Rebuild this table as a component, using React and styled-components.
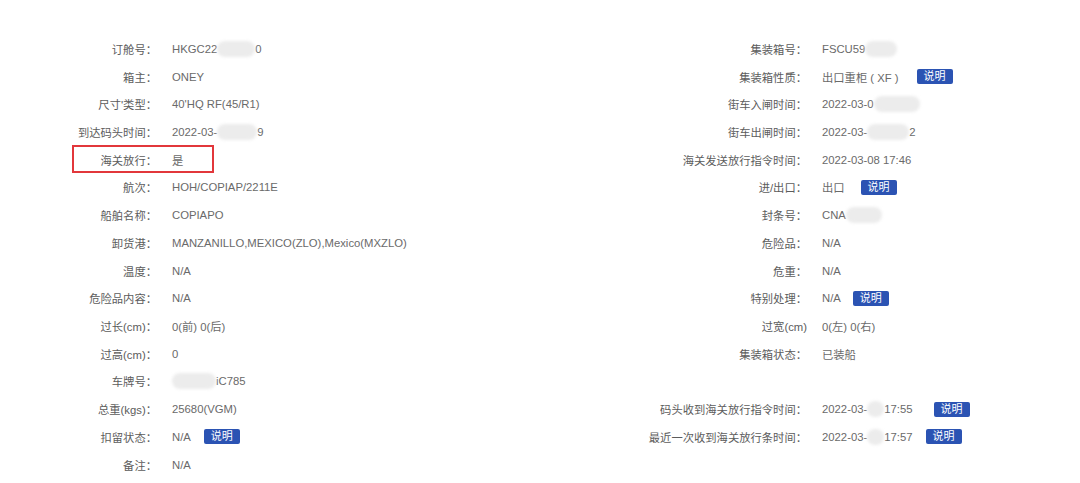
import React from 'react';
import styled, { createGlobalStyle } from 'styled-components';

const GlobalStyle = createGlobalStyle`
  html, body {
    margin: 0;
    padding: 0;
    background: #ffffff;
  }
  body {
    font-family: "Liberation Sans", Arial, "Noto Sans CJK SC", sans-serif;
    font-size: 11.3px;
    color: #666666;
  }
`;

const left = [
  { label: '订舱号', value: ['HKGC22', { blur: 38 }, '0'] },
  { label: '箱主', value: ['ONEY'] },
  { label: "尺寸'类型", value: ["40'HQ RF(45/R1)"] },
  { label: '到达码头时间', value: ['2022-03-', { blur: 40 }, '9'] },
  { label: '海关放行', value: ['是'], highlight: true },
  { label: '航次', value: ['HOH/COPIAP/2211E'] },
  { label: '船舶名称', value: ['COPIAPO'] },
  { label: '卸货港', value: ['MANZANILLO,MEXICO(ZLO),Mexico(MXZLO)'] },
  { label: '温度', value: ['N/A'] },
  { label: '危险品内容', value: ['N/A'] },
  { label: '过长(cm)', value: ['0(前) 0(后)'] },
  { label: '过高(cm)', value: ['0'] },
  { label: '车牌号', value: [{ blur: 44 }, 'iC785'] },
  { label: '总重(kgs)', value: ['25680(VGM)'] },
  { label: '扣留状态', value: ['N/A'], note: 13 },
  { label: '备注', value: ['N/A'] },
];

const right = [
  { label: '集装箱号', value: ['FSCU59', { blur: 32 }] },
  { label: '集装箱性质', value: ['出口重柜 ( XF )'], note: 18 },
  { label: '街车入闸时间', value: ['2022-03-0', { blur: 46 }] },
  { label: '街车出闸时间', value: ['2022-03-', { blur: 42 }, '2'] },
  { label: '海关发送放行指令时间', value: ['2022-03-08 17:46'] },
  { label: '进/出口', value: ['出口'], note: 16 },
  { label: '封条号', value: ['CNA', { blur: 36 }] },
  { label: '危险品', value: ['N/A'] },
  { label: '危重', value: ['N/A'] },
  { label: '特别处理', value: ['N/A'], note: 12 },
  { label: '过宽(cm)', value: ['0(左) 0(右)'], noColon: true },
  { label: '集装箱状态', value: ['已装船'] },
  null,
  { label: '码头收到海关放行指令时间', value: ['2022-03-', { blur: 17 }, '17:55'], note: 21 },
  { label: '最近一次收到海关放行条时间', value: ['2022-03-', { blur: 17 }, '17:57'], note: 13 },
];

function App() {
  return (
    <>
      <GlobalStyle />
      <Page>
        <Column $labelWidth={157} $width={540}>
          {left.map((row, i) => (
            <Field key={i} row={row} />
          ))}
        </Column>
        <Column $labelWidth={267} $width={540}>
          {right.map((row, i) => (
            <Field key={i} row={row} />
          ))}
        </Column>
      </Page>
    </>
  );
}

function Field({ row }) {
  if (!row) return <Row />;
  return (
    <Row $highlight={row.highlight}>
      <Label>
        {row.label}
        {row.noColon ? '' : '：'}
      </Label>
      <Value>
        {row.value.map((part, i) =>
          typeof part === 'string' ? (
            <span key={i}>{part}</span>
          ) : (
            <Blur key={i} $w={part.blur} />
          )
        )}
        {row.note && <NoteButton $gap={row.note}>说明</NoteButton>}
      </Value>
    </Row>
  );
}

export default App;

const Page = styled.div`
  display: flex;
  width: 1080px;
  height: 483px;
  padding-top: 35px;
  box-sizing: border-box;
  overflow: hidden;
`;

const Column = styled.div`
  width: ${({ $width }) => $width}px;
  display: flex;
  flex-direction: column;
  --label-width: ${({ $labelWidth }) => $labelWidth}px;
`;

const Row = styled.div`
  position: relative;
  height: 27.73px;
  display: flex;
  align-items: center;

  ${({ $highlight }) =>
    $highlight &&
    `
    &::after {
      content: '';
      position: absolute;
      left: 72px;
      top: -0.5px;
      width: 142px;
      height: 28px;
      border: 2px solid #e2373b;
      box-sizing: border-box;
      pointer-events: none;
    }
  `}
`;

const Label = styled.div`
  width: var(--label-width);
  flex-shrink: 0;
  text-align: right;
  color: #5c5c5c;
  white-space: nowrap;
`;

const Value = styled.div`
  margin-left: 15px;
  display: flex;
  align-items: center;
  white-space: pre;
  color: #6a6a6a;
`;

const Blur = styled.span`
  display: inline-block;
  width: ${({ $w }) => $w}px;
  height: 16px;
  border-radius: 8px;
  background: #ececec;
  filter: blur(1.5px);
`;

const NoteButton = styled.span`
  display: inline-flex;
  align-items: center;
  justify-content: center;
  margin-left: ${({ $gap }) => $gap}px;
  width: 36px;
  height: 15px;
  border-radius: 2px;
  background: #2b53b3;
  color: #ffffff;
  font-size: 11px;
  line-height: 15px;
`;
